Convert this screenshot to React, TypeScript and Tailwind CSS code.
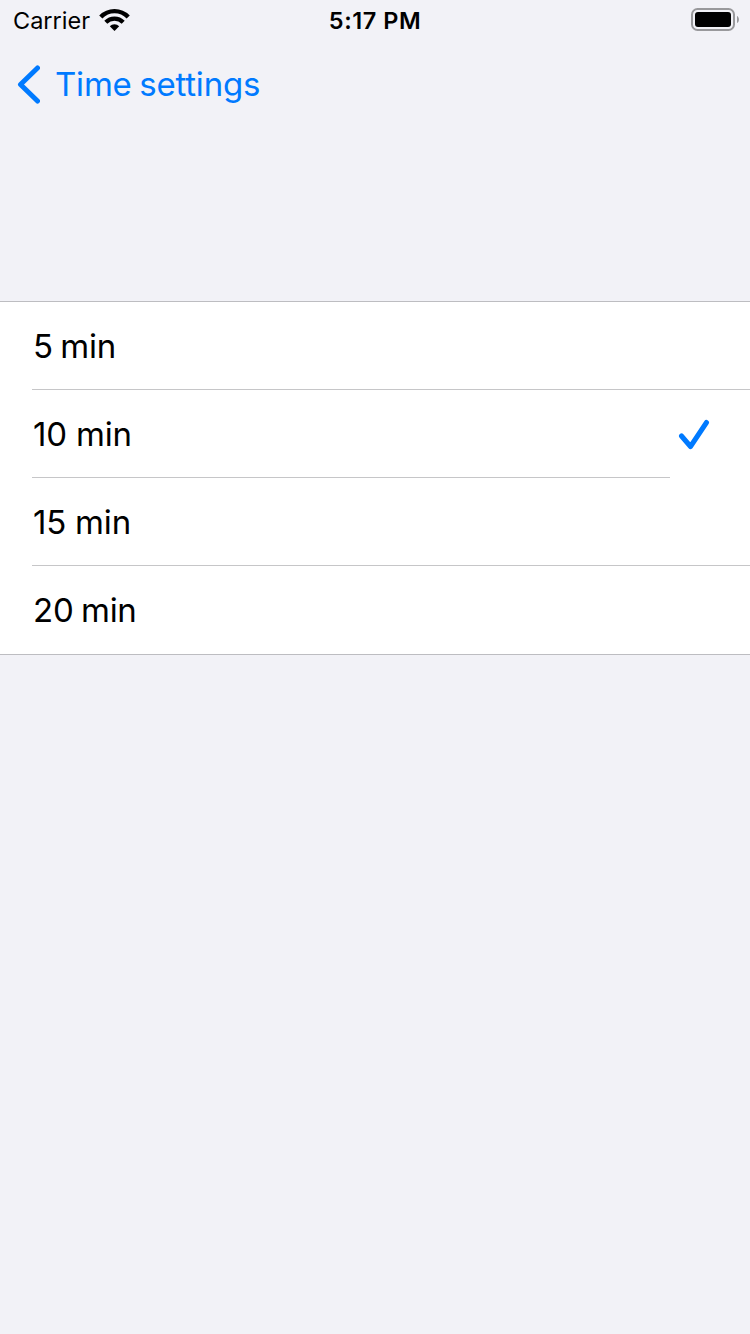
const options = [
  { label: '5 min', spacing: 'tracking-[-0.25px] [word-spacing:-1.5px]' },
  { label: '10 min', spacing: 'tracking-[-0.2px]' },
  { label: '15 min', spacing: 'tracking-[-0.1px] [word-spacing:-0.5px]' },
  { label: '20 min', spacing: 'tracking-[-0.25px] [word-spacing:-1.5px]' },
];

export default function App() {
  return (
    <div className="h-[1334px] w-[750px] overflow-hidden bg-[#f2f2f7] font-['Inter',sans-serif] text-black">
      <header className="grid h-10 grid-cols-3 items-center">
        <div className="flex items-center gap-[9px] pl-[13px]">
          <span className="w-[77px] pt-0.5 text-[23.5px] leading-[38px] whitespace-nowrap">Carrier</span>
          <svg width="32" height="24" viewBox="0 0 32 24" fill="none" stroke="black">
            <path d="M1.8 9a19 19 0 0 1 27.4 0" strokeWidth="4.4" />
            <path d="M6.8 14.2a12.2 12.2 0 0 1 17.4 0" strokeWidth="4.2" />
            <path d="M15.5 23l-4.7-4.7a6.7 6.7 0 0 1 9.4 0z" fill="black" stroke="none" />
          </svg>
        </div>
        <span className="pt-0.5 text-center text-[23.5px] leading-[38px] font-semibold tracking-[0.55px]">5:17 PM</span>
        <svg className="justify-self-end" width="60" height="40" viewBox="690 0 60 40">
          <rect x="692" y="9" width="42" height="21" rx="5.5" fill="none" stroke="#99999c" strokeWidth="2" />
          <rect x="695" y="12" width="36" height="15" rx="3" />
          <path d="M737 16c2.6 1 2.6 6 0 7z" fill="#99999c" />
        </svg>
      </header>
      <nav className="flex h-[88px] items-center gap-[15px] pl-4 text-[#007aff]">
        <svg width="24" height="40" viewBox="0 0 24 40" fill="none" stroke="currentColor" strokeWidth="5" strokeLinecap="round" strokeLinejoin="round">
          <path d="M21.5 4L4.5 20.5L21.5 37" />
        </svg>
        <span className="text-[33px] leading-10 tracking-[-0.2px] [word-spacing:-1.5px]">Time settings</span>
      </nav>
      <main className="mt-[173px] border-y border-[#bdbdc1] bg-white pl-8">
        {options.map(({ label, spacing }, i) => (
          <div key={label} className="relative flex h-22 items-center justify-between pr-10">
            <span className={`pl-px text-[33px] leading-10 ${spacing}`}>{label}</span>
            {i === 1 && (
              <svg width="32" height="32" viewBox="0 0 32 32" fill="none" stroke="#007aff" strokeWidth="5" strokeLinecap="round" strokeLinejoin="round">
                <path d="M3.5 18L12.5 28.5L28.5 4.5" />
              </svg>
            )}
            {i < 3 && <div className={i === 1 ? 'absolute bottom-0 left-0 right-20 h-px bg-[#c6c6c8]' : 'absolute inset-x-0 bottom-0 h-px bg-[#c6c6c8]'} />}
          </div>
        ))}
      </main>
    </div>
  );
}
